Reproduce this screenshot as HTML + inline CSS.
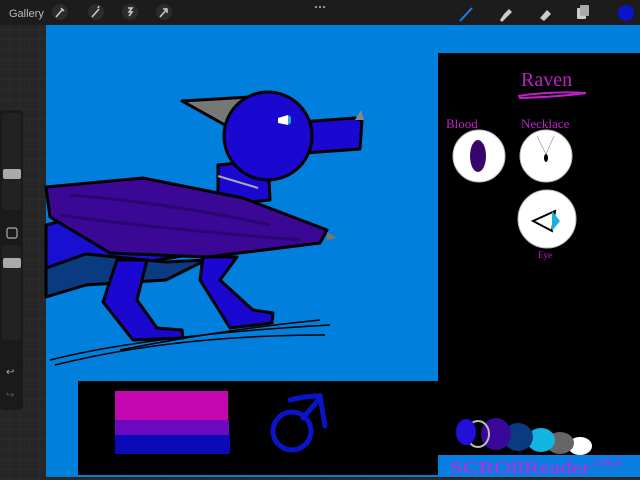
<!DOCTYPE html>
<html><head><style>
body{margin:0;width:640px;height:480px;overflow:hidden;background:#262626;font-family:"Liberation Sans",sans-serif}
</style></head><body>
<svg width="640" height="480" viewBox="0 0 640 480" xmlns="http://www.w3.org/2000/svg" style="position:absolute;left:0;top:0">
<defs><pattern id="g" width="10" height="10" patternUnits="userSpaceOnUse"><path d="M10 0V10H0" fill="none" stroke="#303030" stroke-width="1"/></pattern></defs>
<rect width="640" height="480" fill="#262626"/>
<rect y="25" width="640" height="455" fill="url(#g)"/>
<rect width="640" height="25" fill="#1c1c1c"/>
<text x="9" y="17" fill="#bbb" font-size="11">Gallery</text>
<g fill="#2c2c2c"><circle cx="60" cy="12" r="8"/><circle cx="96" cy="12" r="8"/><circle cx="130" cy="12" r="8"/><circle cx="164" cy="12" r="8"/></g>
<g stroke="#ccc" stroke-width="1.5" fill="none"><path d="M56 17l6-7m-1-2l3 3"/><path d="M92 17l7-8M98 8l1-2"/><path d="M128 8h4l-3 4h3l-3 4"/><path d="M160 17l7-8m-4 0h4v4"/></g>
<g fill="#bbb"><circle cx="316" cy="7" r="1"/><circle cx="320" cy="7" r="1"/><circle cx="324" cy="7" r="1"/></g>
<path d="M460 21l12-13" stroke="#1e7cf0" stroke-width="2"/>
<path d="M500 20l4-6 5-5 3 3-5 5-5 5z" fill="#ccc"/>
<path d="M540 18l7-8 4 4-7 7z" fill="#ccc"/>
<rect x="577" y="8" width="9" height="11" rx="1" fill="#ccc"/><rect x="580" y="5" width="9" height="11" rx="1" fill="#aaa"/>
<circle cx="626" cy="13" r="8" fill="#0a14c8"/>
<rect x="46" y="25" width="594" height="452" fill="#0080dc"/>
<rect x="0" y="110" width="23" height="300" rx="3" fill="#1a1a1a"/>
<rect x="2" y="113" width="19" height="97" rx="3" fill="#222"/>
<rect x="2" y="245" width="19" height="95" rx="3" fill="#222"/>
<rect x="3" y="169" width="18" height="10" rx="2" fill="#aaa"/>
<rect x="3" y="258" width="18" height="10" rx="2" fill="#aaa"/>
<rect x="7" y="228" width="10" height="10" rx="2" fill="none" stroke="#aaa" stroke-width="1.2"/>
<text x="6" y="375" fill="#aaa" font-size="10">↩</text>
<text x="6" y="398" fill="#555" font-size="10">↪</text>
<g stroke="#000" stroke-width="3" stroke-linejoin="round">
<path d="M46 225l30-8 70 10 60 25-60 10-60 12-40 20z" fill="#1810d0"/>
<path d="M46 268l40-14 80 8 40-2-40 20-80 5-40 12z" fill="#0a3a80"/>
<path d="M117 260h30l-10 40 20 28 25 2 1 8-50 2-30-38z" fill="#1a08d0"/>
<path d="M203 257h34l-17 23 33 30 20 3-1 10-42 5-30-48z" fill="#1a08d0"/>
<path d="M218 165l50-5 2 40-52 5z" fill="#1a08d0"/>
<path d="M182 101l68-4-25 28z" fill="#777"/>
<path d="M300 122l55-4 7 3-2 28-55 4z" fill="#1a08d0"/>
<circle cx="268" cy="136" r="44" fill="#1a08d0"/>
<path d="M46 187l97-9 100 20 84 32-7 13-113 14-97-4-60-36z" fill="#3a0894"/>
</g>
<path d="M60 215q80 12 240 25M70 195q100 8 200 30" stroke="#2a0670" stroke-width="3" fill="none"/>
<path d="M355 120l6-10 3 10z" fill="#888"/>
<path d="M327 232l10 6-10 2z" fill="#777"/>
<path d="M218 176l40 12" stroke="#aaa" stroke-width="2"/>
<path d="M278 118l10-3v10l-10-2z" fill="#fff"/><path d="M288 115l3 2v6l-3 2z" fill="#2ac"/>
<path d="M50 360q100-25 280-35M55 365q120-30 270-30M120 350q100-20 200-30" stroke="#000" stroke-width="1.5" fill="none"/>
<rect x="438" y="53" width="202" height="402" fill="#000"/>
<rect x="440" y="455" width="200" height="22" fill="#0a7ee0"/>
<g font-family="Liberation Serif,serif" fill="#c020c8">
<text x="521" y="86" font-size="20">Raven</text>
<text x="446" y="128" font-size="13">Blood</text>
<text x="521" y="128" font-size="13">Necklace</text>
<text x="538" y="258" font-size="9">Eye</text>
<text x="450" y="473" font-size="17" fill="#d020e0" textLength="140" lengthAdjust="spacingAndGlyphs">SCROllReader</text>
<text x="594" y="466" font-size="9" fill="#d020e0">23/9/25</text>
</g>
<path d="M518 96q35-5 68-3-30 4-67 5" stroke="#c020c8" stroke-width="2" fill="none"/>
<circle cx="479" cy="156" r="26" fill="#fff" stroke="#bbb"/>
<ellipse cx="478" cy="156" rx="8" ry="16" fill="#38066a"/>
<circle cx="546" cy="156" r="26" fill="#fff" stroke="#bbb"/>
<path d="M537 136l9 18 8-18" stroke="#999" fill="none" stroke-width=".7"/><ellipse cx="546" cy="158" rx="2" ry="4" fill="#000"/>
<circle cx="547" cy="219" r="29" fill="#fff" stroke="#bbb"/>
<path d="M533 221l22-10-3 20z" fill="#fff" stroke="#000" stroke-width="2"/><path d="M552 211l8 10-8 10z" fill="#1ab0e0"/>
<ellipse cx="580" cy="446" rx="12" ry="9" fill="#fff"/>
<ellipse cx="560" cy="443" rx="14" ry="11" fill="#666"/>
<ellipse cx="541" cy="440" rx="14" ry="12" fill="#12b4e0"/>
<ellipse cx="518" cy="437" rx="15" ry="14" fill="#0a3a80"/>
<ellipse cx="496" cy="434" rx="15" ry="16" fill="#3a0898"/>
<ellipse cx="478" cy="434" rx="11" ry="13" fill="none" stroke="#bbb" stroke-width="2"/>
<ellipse cx="466" cy="432" rx="10" ry="13" fill="#2010d8"/>
<rect x="78" y="381" width="360" height="94" fill="#000"/>
<rect x="115" y="391" width="113" height="30" fill="#c408b0"/>
<rect x="115" y="420" width="114" height="16" fill="#6c08c0"/>
<rect x="115" y="435" width="115" height="19" fill="#0a0ab8"/>
<circle cx="292" cy="431" r="19" fill="none" stroke="#0a14c8" stroke-width="5"/>
<path d="M303 418l17-20m-30 2q15-4 30-4l5 30" stroke="#0a14c8" stroke-width="5" fill="none" stroke-linecap="round"/>
</svg>
</body></html>
